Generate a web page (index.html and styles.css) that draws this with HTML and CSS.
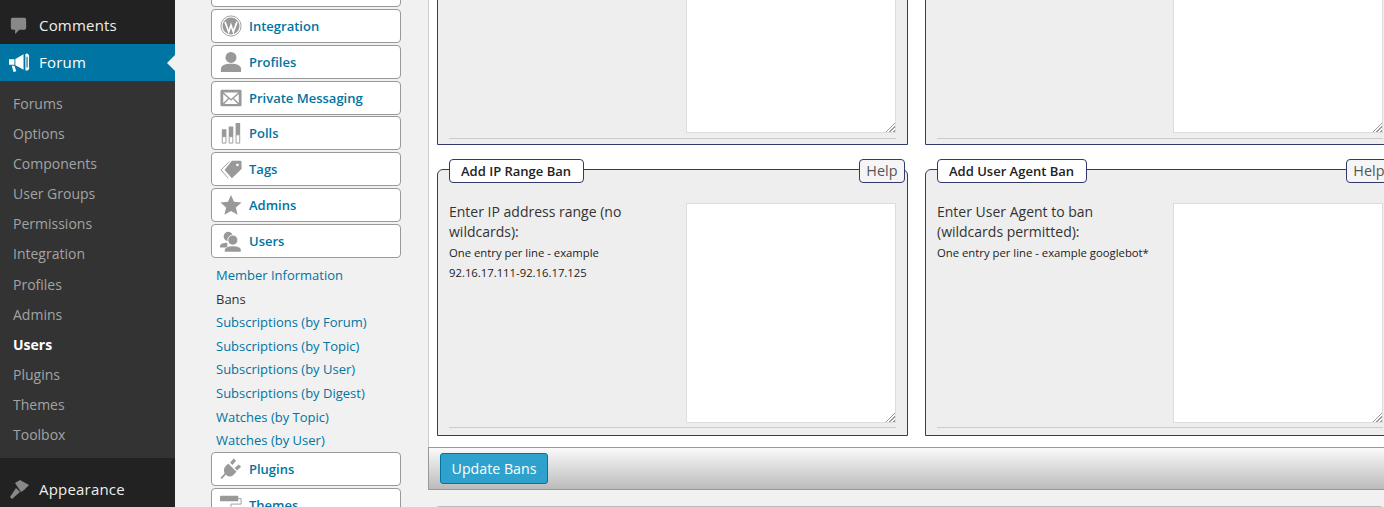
FILE: index.html
```html
<!DOCTYPE html>
<html lang="en">
<head>
    <meta charset="UTF-8">
    <title>Forum - Bans</title>
    <link rel="stylesheet" href="styles.css">
</head>
<body>
    <!-- Admin sidebar -->
    <div class="sidebar">
        <a class="top-item" href="#">
            <svg class="top-icon" viewBox="0 0 20 20"><path fill="#888" d="M3 1h14a2 2 0 0 1 2 2v10a2 2 0 0 1-2 2h-6l-5 5v-5H3a2 2 0 0 1-2-2V3a2 2 0 0 1 2-2z"/></svg>
            Comments
        </a>
        <a class="top-item current" href="#">
            <svg class="top-icon" viewBox="0 0 24 22"><path fill="#fff" d="M1 7h6v6H1zM8 6.500l9-5v17l-9-5zM4 14l3 0 2 6-3 1zM19 1a3 3 0 0 1 4 4v10a3 3 0 0 1-4 4zM20.200 4v12h1.300V4z"/></svg>
            Forum
        </a>
        <div class="submenu">
            <a href="#">Forums</a>
            <a href="#">Options</a>
            <a href="#">Components</a>
            <a href="#">User Groups</a>
            <a href="#">Permissions</a>
            <a href="#">Integration</a>
            <a href="#">Profiles</a>
            <a href="#">Admins</a>
            <a class="active" href="#">Users</a>
            <a href="#">Plugins</a>
            <a href="#">Themes</a>
            <a href="#">Toolbox</a>
        </div>
        <a class="top-item appearance" href="#">
            <svg class="top-icon" viewBox="0 0 20 20"><path fill="#888" d="M6 4l5-3 9 5-5 5-3 2zM1 18l6-9 4 4-8 7z"/></svg>
            Appearance
        </a>
    </div>

    <!-- Forum admin menu -->
    <div class="forum-menu">
        <a class="menu-btn cut" href="#"></a>
        <a class="menu-btn" href="#">
            <svg class="btn-icon" viewBox="0 0 24 24"><circle cx="12" cy="12" r="11" fill="none" stroke="#999"/><circle cx="12" cy="12" r="9.300" fill="#999"/><path fill="none" stroke="#fff" stroke-width="1.800" d="M5.500 7.500l4 11 2.500-7.500 2.500 7.500 4-11"/></svg>
            Integration
        </a>
        <a class="menu-btn" href="#">
            <svg class="btn-icon" viewBox="0 0 24 24"><circle cx="12" cy="7" r="6" fill="#999"/><path fill="#999" d="M1 23v-3c0-4 4-6 11-6s11 2 11 6v3z"/></svg>
            Profiles
        </a>
        <a class="menu-btn" href="#">
            <svg class="btn-icon" viewBox="0 0 24 24"><path fill="#999" d="M2 3h20a1.500 1.500 0 0 1 1.500 1.500v15A1.500 1.500 0 0 1 22 21H2a1.500 1.500 0 0 1-1.500-1.500v-15A1.500 1.500 0 0 1 2 3z"/><path fill="#fff" d="M4 6h16l-8 7zM3.500 7.500l5.300 4.700-5.300 5.300zM20.500 7.500v10l-5.300-5.300zM10 13.200l2 1.800 2-1.800 5.300 5.300H4.700z"/></svg>
            Private Messaging
        </a>
        <a class="menu-btn" href="#">
            <svg class="btn-icon" viewBox="0 0 24 24"><path fill="#999" d="M2 8h5v8H2zM9.500 5h5v11h-5zM17 1h5v13h-5z"/><path fill="none" stroke="#999" d="M2.500 16h4v7h-4zM10 16h4v7h-4zM17.500 14h4v9h-4z"/></svg>
            Polls
        </a>
        <a class="menu-btn" href="#">
            <svg class="btn-icon" viewBox="0 0 24 24"><path fill="#999" d="M13 3h9a1.500 1.500 0 0 1 1.500 1.500V12L13 22l-8-9zM19 6a1.500 1.500 0 1 0 .01 0z" fill-rule="evenodd"/><path fill="none" stroke="#999" d="M10 4L1 13l8 9"/></svg>
            Tags
        </a>
        <a class="menu-btn" href="#">
            <svg class="btn-icon" viewBox="0 0 24 24"><path fill="#999" d="M12 1l3.300 7.500 8.200.8-6.200 5.400 1.900 8L12 18.500 4.800 22.700l1.900-8L.5 9.300l8.200-.8z"/></svg>
            Admins
        </a>
        <a class="menu-btn" href="#">
            <svg class="btn-icon" viewBox="0 0 24 24"><circle cx="9" cy="7" r="5" fill="#999"/><path fill="#999" d="M0 19v-1c0-3 4-4 8-4v5z"/><circle cx="14" cy="11" r="5.500" stroke="#fff" fill="#999"/><path fill="#999" stroke="#fff" stroke-width=".6" d="M5 24v-2c0-3 4-4.500 9-4.500s9 1.500 9 4.500v2z"/></svg>
            Users
        </a>
        <div class="sub-links">
            <a href="#">Member Information</a>
            <a class="here" href="#">Bans</a>
            <a href="#">Subscriptions (by Forum)</a>
            <a href="#">Subscriptions (by Topic)</a>
            <a href="#">Subscriptions (by User)</a>
            <a href="#">Subscriptions (by Digest)</a>
            <a href="#">Watches (by Topic)</a>
            <a href="#">Watches (by User)</a>
        </div>
        <a class="menu-btn" href="#">
            <svg class="btn-icon" viewBox="0 0 24 24"><path fill="#999" d="M9 6l9 9-4 4c-3 2-6 1-7.500-1L2 23l-1.500-1.500L5 17c-1-3-1-6 1-8zM11 5l4-4.500L17.500 3l-4 4.500zM16 11l4.500-4L23 9.500l-4.500 4z"/></svg>
            Plugins
        </a>
        <a class="menu-btn" href="#">
            <svg class="btn-icon" viewBox="0 0 24 24"><path fill="#999" d="M1 2h18a1 1 0 0 1 1 1v4a1 1 0 0 1-1 1H1a1 1 0 0 1-1-1V3a1 1 0 0 1 1-1z"/><path fill="none" stroke="#999" d="M20 5h3v6H12v3"/></svg>
            Themes
        </a>
    </div>

    <!-- Ban panels -->
    <div class="main">
        <div class="form-area">
            <div class="panel-row cut-row">
                <div class="panel">
                    <div class="panel-body"><div class="panel-text"></div><div class="box"><textarea></textarea></div></div>
                </div>
                <div class="panel">
                    <div class="panel-body"><div class="panel-text"></div><div class="box"><textarea></textarea></div></div>
                </div>
            </div>
            <div class="panel-row">
                <div class="panel">
                    <div class="panel-head">
                        <span class="legend">Add IP Range Ban</span>
                        <span class="help">Help</span>
                    </div>
                    <div class="panel-body">
                        <div class="panel-text">
                            <p>Enter IP address range (no wildcards):</p>
                            <small>One entry per line - example</small>
                            <small>92.16.17.111-92.16.17.125</small>
                        </div>
                        <div class="box"><textarea></textarea></div>
                    </div>
                </div>
                <div class="panel">
                    <div class="panel-head">
                        <span class="legend">Add User Agent Ban</span>
                        <span class="help">Help</span>
                    </div>
                    <div class="panel-body">
                        <div class="panel-text">
                            <p>Enter User Agent to ban (wildcards permitted):</p>
                            <small>One entry per line - example googlebot*</small>
                        </div>
                        <div class="box"><textarea></textarea></div>
                    </div>
                </div>
            </div>
        </div>
        <div class="update-bar">
            <button class="update-btn">Update Bans</button>
        </div>
        <div class="next-box"></div>
    </div>
</body>
</html>
```

FILE: styles.css
```css
/* General */
* {
    box-sizing: border-box;
}

body {
    margin: 0;
    height: 507px;
    overflow: hidden;
    display: flex;
    font-family: "Open Sans", sans-serif;
    background-color: #f1f1f1;
    color: #333;
}

a {
    text-decoration: none;
}

/* Admin sidebar */
.sidebar {
    width: 175px;
    flex-shrink: 0;
    height: 507px;
    overflow: hidden;
    background-color: #222;
    padding-top: 7px;
}

.top-item {
    position: relative;
    display: flex;
    align-items: center;
    height: 37px;
    padding-left: 39px;
    padding-bottom: 2px;
    color: #eee;
    font-size: 15px;
    letter-spacing: .2px;
}

.top-icon {
    position: absolute;
    left: 10px;
    top: 10px;
    width: 17px;
    height: 17px;
}

.top-item.current {
    background-color: #0074a2;
    color: #fff;
}

.top-item.current .top-icon {
    left: 8px;
    top: 9px;
    width: 22px;
    height: 20px;
}

.top-item.appearance .top-icon {
    left: 9px;
    top: 8px;
    width: 20px;
    height: 20px;
}

/* little arrow pointing at the content */
.top-item.current::after {
    content: "";
    position: absolute;
    right: 0;
    top: 11px;
    border: 8px solid transparent;
    border-right-color: #f1f1f1;
    border-left-width: 0;
}

.appearance {
    margin-top: 13px;
}

.submenu {
    background-color: #333;
    height: 377px;
    padding-top: 7.4px;
}

.submenu a {
    display: flex;
    align-items: center;
    height: 30.1px;
    padding-left: 13px;
    color: #a3a3a3;
    font-size: 14px;
}

.submenu a.active {
    color: #fff;
    font-weight: 700;
}

/* Forum admin menu */
.forum-menu {
    width: 190px;
    flex-shrink: 0;
    margin-left: 36px;
    margin-right: 27px;
    margin-top: -26.72px;
    display: flex;
    flex-direction: column;
    gap: 1.8px;
}

.menu-btn {
    display: flex;
    align-items: center;
    gap: 7px;
    flex-shrink: 0;
    height: 34px;
    padding-left: 8px;
    background-color: #fff;
    border: 1px solid #999;
    border-radius: 4px;
    color: #0074a2;
    font-size: 13px;
    font-weight: 600;
}

.btn-icon {
    width: 22px;
    height: 22px;
    flex-shrink: 0;
}

.sub-links {
    display: flex;
    flex-direction: column;
    padding: 3.6px 0 0 5px;
    margin-bottom: -1.6px;
}

.sub-links a {
    display: flex;
    align-items: center;
    height: 23.6px;
    color: #0074a2;
    font-size: 13px;
}

.sub-links a.here {
    color: #333;
}

/* Ban panels */
.main {
    flex: 1;
    min-width: 0;
    overflow: hidden;
}

.form-area {
    height: 447px;
    background-color: #fff;
    border-left: 1px solid #ccc;
    padding-left: 8px;
    overflow: hidden;
}

.panel-row {
    display: grid;
    grid-template-columns: 471px 470px;
    gap: 17px;
    margin-top: 24px;
    width: 958px;
}

.cut-row {
    margin-top: -145px;
}

.panel {
    position: relative;
    height: 267px;
    padding: 0 11px;
    background-color: #eee;
    border: 1px solid #333a6b;
    border-radius: 6px 6px 0 0;
}

.cut-row .panel {
    height: 290px;
    padding-top: 57px;
}

.cut-row .panel-body {
    height: 226px;
}

.panel-head {
    height: 33px;
}

.legend {
    display: inline-block;
    height: 24px;
    margin-top: -11px;
    padding: 0 12px 0 11px;
    line-height: 22px;
    background-color: #fff;
    border: 1px solid #333a6b;
    border-radius: 4px;
    color: #222;
    font-size: 13px;
    font-weight: 600;
    vertical-align: top;
}

.help {
    position: absolute;
    right: 2px;
    top: -11px;
    height: 24px;
    padding: 0 6.5px;
    line-height: 22px;
    background-color: #f5f5f5;
    border: 1px solid #333a6b;
    border-radius: 4px;
    color: #555;
    font-size: 14.4px;
}

.panel-body {
    display: flex;
    justify-content: space-between;
    height: 225px;
    border-bottom: 1px solid #ccc;
}

.panel-text {
    width: 215px;
    margin-top: -1px;
}

.panel-text p {
    margin: 0 0 1px;
    font-size: 14px;
    line-height: 20px;
    color: #333;
}

.panel-text small {
    display: block;
    font-size: 11.3px;
    line-height: 20px;
    color: #222;
}

.box {
    position: relative;
    width: 210px;
    height: 220px;
}

textarea {
    display: block;
    width: 100%;
    height: 100%;
    border: 1px solid #ddd;
    background-color: #fff;
    outline: none;
    resize: none;
}

/* resize grip in the corner of the box */
.box::after {
    content: "";
    position: absolute;
    right: 1px;
    bottom: 1px;
    width: 12px;
    height: 12px;
    background: repeating-linear-gradient(135deg, #fff 0, #fff 1.5px, #999 1.5px, #999 2.8px);
    clip-path: polygon(100% 0, 100% 100%, 0 100%);
}

/* Update bar */
.update-bar {
    height: 43px;
    padding: 5px 0 0 11px;
    background: linear-gradient(to bottom, #fafafa, #bbb);
    border: 1px solid #999;
    border-right: none;
}

.update-btn {
    width: 108px;
    height: 31px;
    padding: 0;
    background-color: #2ea2cc;
    border: 1px solid #0074a2;
    border-radius: 3px;
    color: #fff;
    font-family: inherit;
    font-size: 14.2px;
}

.next-box {
    height: 40px;
    margin: 16px 0 0 7px;
    border: 1px solid #bbb;
    border-radius: 4px;
    background-color: #f1f1f1;
}
```
